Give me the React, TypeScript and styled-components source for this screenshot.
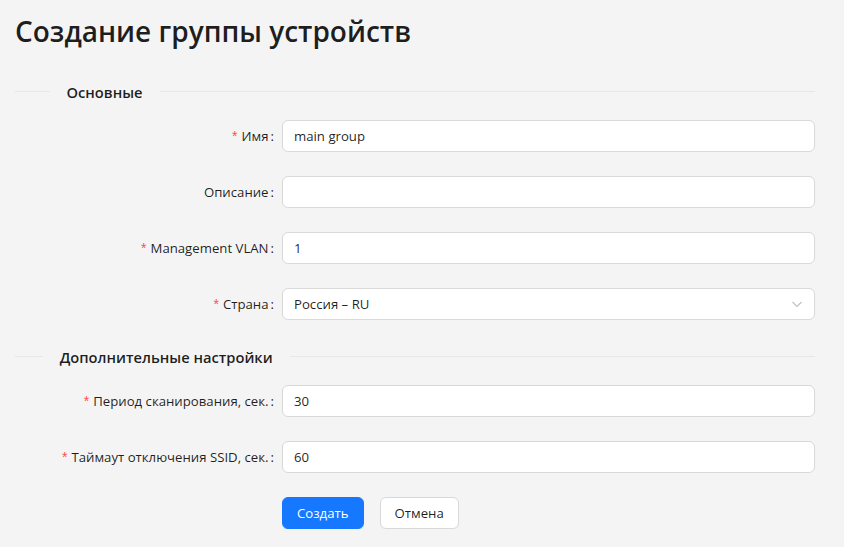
import React from 'react';
import styled, { createGlobalStyle } from 'styled-components';

const GlobalStyle = createGlobalStyle`
  html, body {
    margin: 0;
    padding: 0;
    background: #f4f4f4;
  }
  body {
    font-family: "Open Sans", "Noto Sans", sans-serif;
    color: rgba(0, 0, 0, 0.88);
  }
`;

const Page = styled.div`
  width: 800px;
  padding: 11px 0 0 15px;
`;

const Title = styled.h2`
  margin: 0 0 28px;
  font-size: 28px;
  font-weight: 600;
  line-height: 40px;
  color: rgba(0, 0, 0, 0.88);
`;

const DividerRow = styled.div`
  display: flex;
  align-items: center;
  height: 25px;
  margin: 0 0 16px;
`;

const DividerLine = styled.div<{ $grow: number }>`
  flex: ${(p) => p.$grow} 1 0;
  height: 1px;
  background: #e7e7e7;
`;

const DividerText = styled.span`
  padding: 0 17px;
  font-size: 14.7px;
  font-weight: 600;
  white-space: nowrap;
`;

const Item = styled.div`
  display: flex;
  align-items: center;
  margin-bottom: 24px;
`;

const Label = styled.label`
  flex: 0 0 267px;
  display: flex;
  justify-content: flex-end;
  align-items: center;
  font-size: 13.2px;
  color: rgba(0, 0, 0, 0.88);
  white-space: nowrap;
  &::after {
    content: ':';
    margin: 0 8px 0 2px;
  }
`;

const Required = styled.span`
  color: #ff4d4f;
  font-family: "Liberation Sans", sans-serif;
  font-size: 14px;
  margin-right: 4px;
`;

const Control = styled.div`
  flex: 1;
  position: relative;
`;

const Input = styled.input`
  box-sizing: border-box;
  width: 100%;
  height: 32px;
  padding: 4px 11px;
  border: 1px solid #d9d9d9;
  border-radius: 6px;
  background: #fff;
  font-family: inherit;
  font-size: 13.2px;
  color: rgba(0, 0, 0, 0.88);
  outline: none;
`;

const SelectBox = styled.div`
  box-sizing: border-box;
  display: flex;
  align-items: center;
  justify-content: space-between;
  height: 32px;
  padding: 0 11px;
  border: 1px solid #d9d9d9;
  border-radius: 6px;
  background: #fff;
  font-size: 13.2px;
`;

const Actions = styled.div`
  display: flex;
  gap: 16px;
  padding-left: 267px;
`;

const Button = styled.button<{ $primary?: boolean }>`
  box-sizing: border-box;
  height: 32px;
  padding: 0 14px;
  border-radius: 6px;
  border: 1px solid ${(p) => (p.$primary ? '#1677ff' : '#d9d9d9')};
  background: ${(p) => (p.$primary ? '#1677ff' : '#fff')};
  color: ${(p) => (p.$primary ? '#fff' : 'rgba(0, 0, 0, 0.88)')};
  font-family: inherit;
  font-size: 13.2px;
  box-shadow: ${(p) => (p.$primary ? '0 2px 0 rgba(5, 145, 255, 0.1)' : '0 2px 0 rgba(0, 0, 0, 0.02)')};
`;

function Divider({ title }: { title: string }) {
  return (
    <DividerRow>
      <DividerLine $grow={5} />
      <DividerText>{title}</DividerText>
      <DividerLine $grow={95} />
    </DividerRow>
  );
}

function Field({ label, required, value }: { label: string; required?: boolean; value: string }) {
  return (
    <Item>
      <Label>
        {required && <Required>*</Required>}
        {label}
      </Label>
      <Control>
        <Input defaultValue={value} />
      </Control>
    </Item>
  );
}

export default function App() {
  return (
    <Page>
      <GlobalStyle />
      <Title>Создание группы устройств</Title>
      <Divider title="Основные" />
      <Field label="Имя" required value="main group" />
      <Field label="Описание" value="" />
      <Field label="Management VLAN" required value="1" />
      <Item>
        <Label>
          <Required>*</Required>
          Страна
        </Label>
        <Control>
          <SelectBox>
            <span>Россия – RU</span>
            <svg width="12" height="12" viewBox="0 0 12 12" fill="none">
              <path d="M1.5 4l4.5 4.5L10.5 4" stroke="rgba(0,0,0,0.25)" strokeWidth="1.1" />
            </svg>
          </SelectBox>
        </Control>
      </Item>
      <Divider title="Дополнительные настройки" />
      <Field label="Период сканирования, сек." required value="30" />
      <Field label="Таймаут отключения SSID, сек." required value="60" />
      <Actions>
        <Button $primary>Создать</Button>
        <Button>Отмена</Button>
      </Actions>
    </Page>
  );
}
